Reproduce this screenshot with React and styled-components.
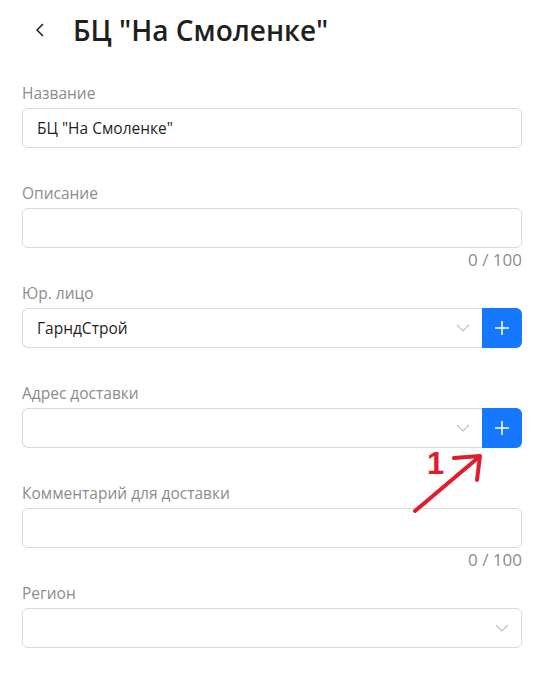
import styled, { createGlobalStyle } from "styled-components";

const GlobalStyle = createGlobalStyle`
  body {
    margin: 0;
    background: #fff;
    font-family: "Segoe UI", "Open Sans", "Noto Sans", sans-serif;
  }
`;

export default function App() {
  return (
    <Page>
      <GlobalStyle />
      <Header>
        <Back>
          <svg width="12" height="16" viewBox="0 0 12 16">
            <path d="M9 2 L3 8 L9 14" fill="none" stroke="#1f1f1f" strokeWidth="1.5" />
          </svg>
        </Back>
        <Title>БЦ "На Смоленке"</Title>
      </Header>

      <Form>
        <Field>
          <Label>Название</Label>
          <Input>БЦ "На Смоленке"</Input>
        </Field>
        <Field>
          <Label>Описание</Label>
          <Input />
          <Counter>0 / 100</Counter>
        </Field>
        <Field>
          <Label>Юр. лицо</Label>
          <Group>
            <Select $joined>
              ГарндСтрой
              <Chevron />
            </Select>
            <AddButton>
              <Plus />
            </AddButton>
          </Group>
        </Field>
        <Field>
          <Label>Адрес доставки</Label>
          <Group>
            <Select $joined>
              <Chevron />
            </Select>
            <AddButton>
              <Plus />
            </AddButton>
          </Group>
          <Annotation>
            <svg width="80" height="70" viewBox="0 0 80 70">
              <path d="M2 62 L66 8" stroke="#e21d2b" strokeWidth="4" strokeLinecap="round" fill="none" />
              <path d="M41 9 L67 7 L64 31" stroke="#e21d2b" strokeWidth="4" strokeLinecap="round" strokeLinejoin="round" fill="none" />
            </svg>
            <Mark>1</Mark>
          </Annotation>
        </Field>
        <Field>
          <Label>Комментарий для доставки</Label>
          <Input />
          <Counter>0 / 100</Counter>
        </Field>
        <Field>
          <Label>Регион</Label>
          <Select>
            <Chevron />
          </Select>
        </Field>
      </Form>
    </Page>
  );
}

function Chevron() {
  return (
    <ChevronBox>
      <svg width="14" height="10" viewBox="0 0 14 10">
        <path d="M1 2 L7 8 L13 2" fill="none" stroke="#bfbfbf" strokeWidth="1.2" />
      </svg>
    </ChevronBox>
  );
}

function Plus() {
  return (
    <svg width="14" height="14" viewBox="0 0 14 14">
      <path d="M7 0 V14 M0 7 H14" stroke="#fff" strokeWidth="1.5" />
    </svg>
  );
}

const Page = styled.div`
  width: 557px;
  height: 676px;
  padding: 10px 35px 0 22px;
  box-sizing: border-box;
  overflow: hidden;
`;

const Header = styled.div`
  display: flex;
  align-items: center;
  height: 40px;
  margin-bottom: 32px;
`;

const Back = styled.div`
  width: 51px;
  padding-left: 12px;
  box-sizing: border-box;
  display: flex;
  align-items: center;
`;

const Title = styled.h1`
  margin: 0;
  font-size: 28px;
  font-weight: 600;
  color: #1f1f1f;
`;

const Form = styled.div`
  display: flex;
  flex-direction: column;
`;

const Field = styled.div`
  position: relative;
  height: 100px;
  display: flex;
  flex-direction: column;
`;

const Label = styled.div`
  font-size: 15.5px;
  color: #8c8c8c;
  line-height: 22px;
  height: 22px;
  margin-bottom: 4px;
`;

const Input = styled.div`
  height: 40px;
  flex: none;
  box-sizing: border-box;
  border: 1px solid #d9d9d9;
  border-radius: 6px;
  padding: 0 14px;
  display: flex;
  align-items: center;
  font-size: 15.5px;
  color: #1f1f1f;
`;

const Counter = styled.div`
  text-align: right;
  font-size: 17px;
  color: #8c8c8c;
  line-height: 24px;
`;

const Group = styled.div`
  display: flex;
`;

const Select = styled(Input)`
  flex: ${(p) => (p.$joined ? "1" : "none")};
  position: relative;
  border-radius: ${(p) => (p.$joined ? "6px 0 0 6px" : "6px")};
  border-right: ${(p) => (p.$joined ? "none" : "1px solid #d9d9d9")};
`;

const ChevronBox = styled.span`
  position: absolute;
  right: 12px;
  top: 14px;
  display: flex;
`;

const AddButton = styled.div`
  width: 40px;
  height: 40px;
  background: #1677ff;
  border-radius: 0 6px 6px 0;
  display: flex;
  align-items: center;
  justify-content: center;
`;

const Annotation = styled.div`
  position: absolute;
  left: 391px;
  top: 67px;
  z-index: 2;
`;

const Mark = styled.span`
  position: absolute;
  left: 14px;
  top: -3px;
  font-family: "Liberation Sans", Arial, sans-serif;
  font-weight: 700;
  font-size: 31px;
  color: #e21d2b;
`;
